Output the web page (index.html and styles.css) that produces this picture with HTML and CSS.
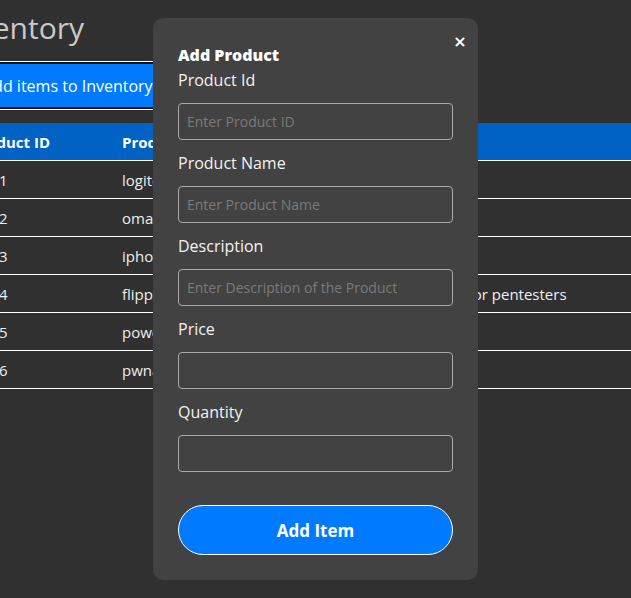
FILE: index.html
```html
<!DOCTYPE html>
<html lang="en">
<head>
<meta charset="utf-8">
<title>Inventory</title>
<link rel="stylesheet" href="styles.css">
</head>
<body>
<div class="page">
  <h1 class="title">Inventory</h1>
  <button class="add-items">Add items to Inventory</button>
  <table class="inv-table">
    <colgroup>
      <col class="w-id"><col class="w-name"><col class="w-desc"><col class="w-price"><col class="w-qty">
    </colgroup>
    <thead>
      <tr><th class="c-id">Product ID</th><th>Product Name</th><th>Description</th><th>Price</th><th>Quantity</th></tr>
    </thead>
    <tbody>
      <tr><td class="c-id">1</td><td>logitech mouse</td><td>mouse</td><td>20</td><td>10</td></tr>
      <tr><td class="c-id">2</td><td>omada switch</td><td>switch</td><td>60</td><td>5</td></tr>
      <tr><td class="c-id">3</td><td>iphone 14</td><td>phone</td><td>999</td><td>3</td></tr>
      <tr><td class="c-id">4</td><td>flipper zero</td><td>hacking tool for pentesters</td><td>169</td><td>7</td></tr>
      <tr><td class="c-id">5</td><td>power bank</td><td>charger</td><td>30</td><td>12</td></tr>
      <tr><td class="c-id">6</td><td>pwnagotchi</td><td>wifi tool</td><td>80</td><td>2</td></tr>
    </tbody>
  </table>
</div>

<div class="modal">
  <button class="close" aria-label="Close">&times;</button>
  <h2 class="modal-title">Add Product</h2>
  <form class="form">
    <label class="label">Product Id</label>
    <input class="field" type="text" placeholder="Enter Product ID">
    <label class="label">Product Name</label>
    <input class="field" type="text" placeholder="Enter Product Name">
    <label class="label">Description</label>
    <input class="field" type="text" placeholder="Enter Description of the Product">
    <label class="label">Price</label>
    <input class="field" type="text">
    <label class="label">Quantity</label>
    <input class="field" type="text">
    <button class="submit" type="button">Add Item</button>
  </form>
</div>
</body>
</html>
```

FILE: styles.css
```css
html, body {
  margin: 0;
  padding: 0;
}
body {
  background: #303030;
  font-family: "Open Sans", "DejaVu Sans", sans-serif;
  color: #eee;
  width: 631px;
  height: 598px;
  overflow: hidden;
  position: relative;
}
.page {
  margin-left: -49px;
  width: 900px;
}
.title {
  margin: 0;
  height: 58px;
  padding-top: 4px;
  box-sizing: border-box;
  font-size: 30px;
  font-weight: 400;
  line-height: 48px;
  color: #c9c9c9;
}
.add-items {
  display: block;
  margin: 4px 0 0 28px;
  height: 47px;
  padding: 0 10px 0 2px;
  background: #007bff;
  border: 2px solid #111;
  outline: 1px solid #fff;
  color: #fff;
  font-family: inherit;
  font-size: 16px;
}
.inv-table {
  margin-top: 14px;
  border-collapse: collapse;
  table-layout: fixed;
  width: 900px;
  font-size: 15px;
}
.w-id { width: 171px; }
.w-name { width: 257px; }
.w-desc { width: 273px; }
.w-price { width: 100px; }
.w-qty { width: 99px; }
.inv-table th {
  background: #0062c4;
  color: #fff;
  font-weight: 700;
  text-align: left;
  height: 37px;
  padding: 0;
  border-bottom: 1px solid #fff;
  white-space: nowrap;
}
.inv-table td {
  height: 37px;
  padding: 0;
  border-bottom: 1px solid #fff;
  color: #eee;
  white-space: nowrap;
}
.inv-table th.c-id { padding-left: 20px; }
.inv-table td.c-id { padding-left: 48px; }

.modal {
  position: absolute;
  left: 153px;
  top: 18px;
  width: 325px;
  height: 562px;
  box-sizing: border-box;
  padding: 25px 25px 0 25px;
  background: #424242;
  border-radius: 10px;
}
.close {
  position: absolute;
  top: 15px;
  right: 11px;
  background: none;
  border: 0;
  padding: 0;
  color: #fff;
  font-size: 16px;
  font-weight: 700;
  line-height: 18px;
  font-family: "DejaVu Sans", sans-serif;
  width: 14px;
}
.modal-title {
  margin: 0;
  font-size: 16px;
  font-weight: 800;
  line-height: 24px;
  color: #fff;
}
.form {
  display: flex;
  flex-direction: column;
  margin-top: 1px;
}
.label {
  font-size: 16px;
  line-height: 24px;
  color: #f2f2f2;
}
.field {
  margin: 11px 0 11px 0;
  height: 37px;
  box-sizing: border-box;
  background: #424242;
  border: 1px solid #a9a9a9;
  border-radius: 4px;
  padding: 0 8px;
  font-family: inherit;
  font-size: 14px;
  color: #eee;
}
.field::placeholder {
  color: #7a7a7a;
}
.submit {
  margin-top: 22px;
  height: 50px;
  background: #007bff;
  border: 1px solid #fff;
  border-radius: 25px;
  color: #fff;
  font-family: inherit;
  font-size: 17px;
  font-weight: 700;
}
```
